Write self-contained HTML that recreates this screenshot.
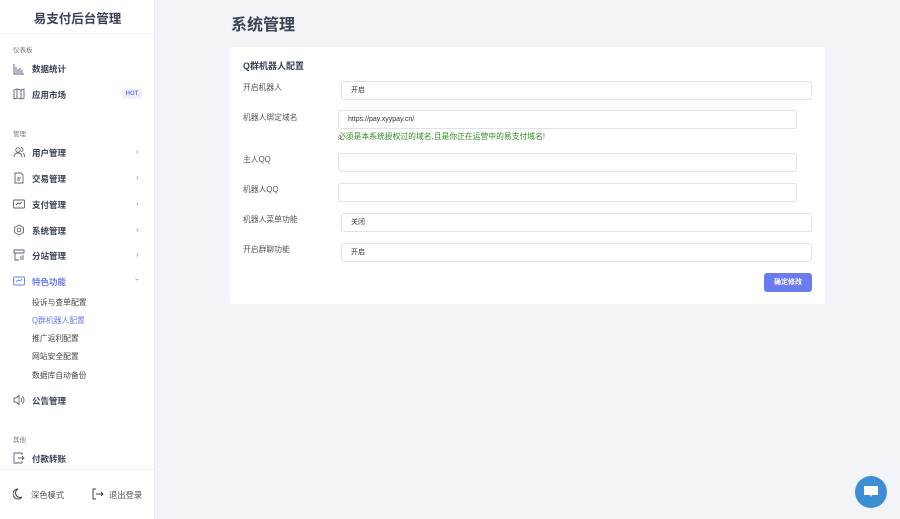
<!DOCTYPE html>
<html><head><meta charset="utf-8"><style>
*{margin:0;padding:0;box-sizing:border-box}
body{width:900px;height:519px;overflow:hidden;background:#f3f4f8;font-family:"Liberation Sans","Noto Sans CJK SC",sans-serif;position:relative;color:#333}
.sb{position:absolute;left:0;top:0;width:155px;height:519px;background:#fff;border-right:1px solid #e8eaef}
.ab{position:absolute;white-space:nowrap}
.brand{left:0;width:155px;top:8px;text-align:center;font-size:12.5px;font-weight:bold;color:#3a4254}
.hr{position:absolute;left:0;width:155px;height:1px;background:#eef0f4}
.sec{left:13px;font-size:6.5px;color:#777}
.it{left:32px;font-size:8.5px;font-weight:bold;color:#3a4254}
.ic{position:absolute;left:13px;width:12px;height:12px}
.ar{position:absolute;left:136px;font-size:8px;color:#8a90a0}
.sub{left:32px;font-size:7.8px;color:#444}
.card{position:absolute;left:230px;top:47px;width:595px;height:257px;background:#fff;border-radius:3px}
.lb{position:absolute;left:13px;font-size:7.8px;color:#555}
.in{position:absolute;height:19px;border:1px solid #dfe2e8;border-radius:3px;background:#fff;font-size:7px;color:#333;padding-left:9px;line-height:17px}
</style></head><body>
<div class="sb">
<div class="ab brand">易支付后台管理</div>
<div class="hr" style="top:33px"></div>
<div class="ab sec" style="top:44px">仪表板</div>
<svg class="ic" style="top:63px" viewBox="0 0 12 12" fill="none" stroke="#5a6275" stroke-width=".9"><path d="M1 1v10h10M3 10V4M5 10V6M7 10V5M9 10V7"/></svg>
<div class="ab it" style="top:63px">数据统计</div>
<svg class="ic" style="top:88px" viewBox="0 0 12 12" fill="none" stroke="#5a6275" stroke-width=".9"><path d="M1 2l3-1 4 1 3-1v9l-3 1-4-1-3 1zM4 1v9M8 2v9"/></svg>
<div class="ab it" style="top:89px">应用市场</div>
<div class="ab" style="left:122px;top:89px;width:20px;height:10px;background:#eef0fd;color:#6b7bf0;font-size:6px;font-weight:bold;text-align:center;line-height:10px;border-radius:2px">HOT</div>
<div class="ab sec" style="top:128px">管理</div>
<svg class="ic" style="top:146px" viewBox="0 0 12 12" fill="none" stroke="#5a6275" stroke-width=".9"><circle cx="5" cy="4" r="2.2"/><path d="M1 11c0-3 2-4 4-4s4 1 4 4M8 1.5a2 2 0 010 4M10 7c1 .5 1.5 2 1.5 4"/></svg>
<div class="ab it" style="top:147px">用户管理</div><div class="ar" style="top:147px">›</div>
<svg class="ic" style="top:172px" viewBox="0 0 12 12" fill="none" stroke="#5a6275" stroke-width=".9"><path d="M2 1h6l2 2v8H2zM4 6h4M4 8h3"/></svg>
<div class="ab it" style="top:173px">交易管理</div><div class="ar" style="top:173px">›</div>
<svg class="ic" style="top:198px" viewBox="0 0 12 12" fill="none" stroke="#5a6275" stroke-width=".9"><rect x=".5" y="2" width="11" height="8" rx="1"/><path d="M3 7l2-2 2 1 2-2"/></svg>
<div class="ab it" style="top:199px">支付管理</div><div class="ar" style="top:199px">›</div>
<svg class="ic" style="top:224px" viewBox="0 0 12 12" fill="none" stroke="#5a6275" stroke-width=".9"><path d="M6 1l4.5 2.5v5L6 11 1.5 8.5v-5z"/><circle cx="6" cy="6" r="1.8"/></svg>
<div class="ab it" style="top:225px">系统管理</div><div class="ar" style="top:225px">›</div>
<svg class="ic" style="top:249px" viewBox="0 0 12 12" fill="none" stroke="#5a6275" stroke-width=".9"><path d="M1 1h10v3H1zM2 4v7h4M8 7v4M10 6v5"/></svg>
<div class="ab it" style="top:250px">分站管理</div><div class="ar" style="top:250px">›</div>
<svg class="ic" style="top:275px" viewBox="0 0 12 12" fill="none" stroke="#6b7bf0" stroke-width=".9"><rect x=".5" y="2" width="11" height="8" rx="1"/><path d="M3 7l2-2 2 1 2-2"/></svg>
<div class="ab it" style="top:276px;color:#6b7bf0">特色功能</div><div class="ar" style="top:275px;transform:rotate(90deg)">›</div>
<div class="ab sub" style="top:297px">投诉与查单配置</div>
<div class="ab sub" style="top:315px;color:#6b7bf0">Q群机器人配置</div>
<div class="ab sub" style="top:333px">推广返利配置</div>
<div class="ab sub" style="top:351px">网站安全配置</div>
<div class="ab sub" style="top:370px">数据库自动备份</div>
<svg class="ic" style="top:394px" viewBox="0 0 12 12" fill="none" stroke="#5a6275" stroke-width=".9"><path d="M1 4h2l3-2.5v9L3 8H1zM8 4c1 1 1 3 0 4M9.5 2.5c2 2 2 5 0 7"/></svg>
<div class="ab it" style="top:395px">公告管理</div>
<div class="ab sec" style="top:434px">其他</div>
<svg class="ic" style="top:452px" viewBox="0 0 12 12" fill="none" stroke="#5a6275" stroke-width=".9"><path d="M9 3V1H1v10h8V9M5 6h6M9 4l2 2-2 2"/></svg>
<div class="ab it" style="top:453px">付款转账</div>
<div class="hr" style="top:469px"></div>
<svg class="ic" style="top:488px" viewBox="0 0 12 12" fill="none" stroke="#3a4254" stroke-width="1"><path d="M5 1a5 5 0 104 8 4 4 0 01-4-8z"/></svg>
<div class="ab" style="left:31px;top:489px;font-size:8.3px;color:#555">深色模式</div>
<svg class="ic" style="top:488px;left:92px" viewBox="0 0 12 12" fill="none" stroke="#3a4254" stroke-width="1"><path d="M4 1H1v10h3M4 6h7M9 4l2 2-2 2"/></svg>
<div class="ab" style="left:109px;top:489px;font-size:8.3px;color:#555">退出登录</div>
</div>
<div class="ab" style="left:231px;top:11px;font-size:16px;font-weight:bold;color:#3a4254">系统管理</div>
<div class="card">
<div class="ab" style="left:13px;top:12px;font-size:9px;font-weight:bold;color:#3a4254">Q群机器人配置</div>
<div class="lb" style="top:35px">开启机器人</div>
<div class="in" style="left:111px;top:34px;width:471px">开启</div>
<div class="lb" style="top:65px">机器人绑定域名</div>
<div class="in" style="left:108px;top:63px;width:459px">https://pay.xyypay.cn/</div>
<div class="ab" style="left:108px;top:84px;font-size:7.8px;color:#2d8a22">必须是本系统授权过的域名,且是你正在运营中的易支付域名!</div>
<div class="lb" style="top:107px">主人QQ</div>
<div class="in" style="left:108px;top:106px;width:459px"></div>
<div class="lb" style="top:137px">机器人QQ</div>
<div class="in" style="left:108px;top:136px;width:459px"></div>
<div class="lb" style="top:167px">机器人菜单功能</div>
<div class="in" style="left:111px;top:166px;width:471px">关闭</div>
<div class="lb" style="top:197px">开启群聊功能</div>
<div class="in" style="left:111px;top:196px;width:471px">开启</div>
<div class="ab" style="left:534px;top:226px;width:48px;height:19px;background:#6b7bf0;border-radius:3px;color:#fff;font-size:7px;font-weight:bold;text-align:center;line-height:19px">确定修改</div>
</div>
<div class="ab" style="left:855px;top:476px;width:32px;height:32px;border-radius:50%;background:#3d8ed4"></div>
<svg class="ab" style="left:862px;top:484px" width="18" height="16" viewBox="0 0 18 16"><path d="M2 2h14v9h-6l-1 2-1-2H2z" fill="#fff"/></svg>
</body></html>
